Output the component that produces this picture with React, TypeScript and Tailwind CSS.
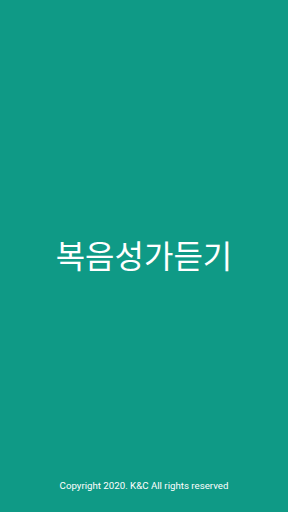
export default function App() {
  return (
    <div className="w-[288px] h-[512px] bg-[#0f9a86] flex flex-col items-center text-white" style={{ fontFamily: 'Roboto, "Noto Sans CJK KR", sans-serif' }}>
      <div className="flex-1 flex items-center justify-center pt-[26px]">
        <span className="text-[32px] leading-none" style={{ fontFamily: '"Noto Sans CJK KR", sans-serif' }}>복음성가듣기</span>
      </div>
      <div className="text-[9.7px] leading-none pb-[21px]">Copyright 2020. K&amp;C All rights reserved</div>
    </div>
  );
}
